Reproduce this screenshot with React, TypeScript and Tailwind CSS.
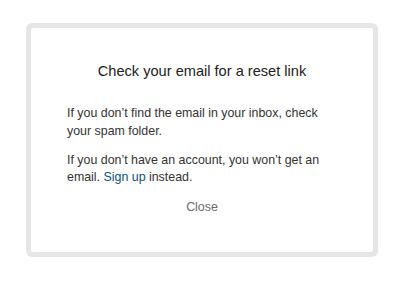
export default function App() {
  return (
    <div className="min-h-screen bg-white pt-[23px] pl-[26px] font-['Liberation_Sans',sans-serif]">
      <div className="w-[352px] h-[234px] rounded-[6px] bg-[#e6e6e6] p-[5px]">
        <div className="flex h-full flex-col items-center rounded-[2px] bg-white px-[36px] pt-[33px]">
          <h1 className="text-[14.6px] leading-[20px] text-[#222]">Check your email for a reset link</h1>
          <div className="mt-[24px] w-full text-[12.4px] leading-[17.5px] text-[#333]">
            <p>If you don’t find the email in your inbox, check your spam folder.</p>
            <p className="mt-[11.5px]">
              <span className="block">If you don’t have an account, you won’t get an</span>
              <span className="block">
                email. <a className="text-[#0a4f86]">Sign up</a> instead.
              </span>
            </p>
          </div>
          <button className="mt-[12px] text-[12.4px] leading-[17px] text-[#6b6b6b]">Close</button>
        </div>
      </div>
    </div>
  );
}
